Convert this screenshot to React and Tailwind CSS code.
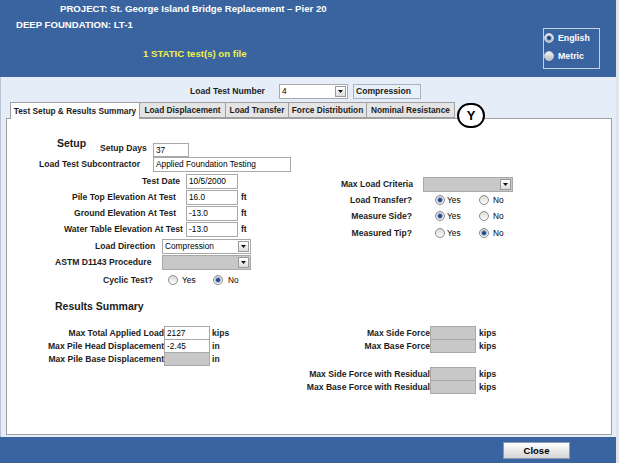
const LBL = 'text-[8.6px] font-bold text-[#1c1c1c] whitespace-nowrap leading-none';
const TXT = 'text-[8.3px] text-black whitespace-nowrap leading-none';

function Radio({ on, light }) {
  return (
    <span
      className={
        'flex h-[10px] w-[10px] shrink-0 items-center justify-center rounded-full border ' +
        (light
          ? 'border-[#c9d3e0] bg-gradient-to-b from-[#f4f4f4] to-[#bdbdbd]'
          : 'border-[#8c8c8c] bg-gradient-to-b from-[#d8d8d8] to-white')
      }
    >
      {on && <span className="h-[6px] w-[6px] rounded-full border border-[#9fb6d6] bg-[#1f467f]" />}
    </span>
  );
}

function Field({ className, value, gray }) {
  return (
    <div
      className={
        'flex shrink-0 items-center overflow-hidden border border-[#a8a8a8] pl-[2px] ' +
        (gray ? 'bg-[#c8c8c8] ' : 'bg-white ') +
        className
      }
    >
      <span className={TXT}>{value}</span>
    </div>
  );
}

function Dropdown({ className, value, gray }) {
  return (
    <div
      className={
        'flex h-[15px] shrink-0 items-center border border-[#a8a8a8] ' +
        (gray ? 'bg-[#c8c8c8] ' : 'bg-white ') +
        className
      }
    >
      <span className={TXT + ' flex-1 pl-[2px]'}>{value}</span>
      <span className="mr-[1px] flex h-[11px] w-[11px] items-center justify-center border border-[#9a9a9a] bg-gradient-to-b from-white to-[#dcdcdc]">
        <svg width="5" height="3" viewBox="0 0 5 3">
          <path d="M0 0h5L2.5 3z" fill="#111" />
        </svg>
      </span>
    </div>
  );
}

function YesNo({ yes, first, gapA, wYes, gapB }) {
  return (
    <>
      <span className={first}>
        <Radio on={yes} />
      </span>
      <span className={TXT + ' text-[#222] ' + gapA + ' ' + wYes}>Yes</span>
      <Radio on={!yes} />
      <span className={TXT + ' text-[#222] ' + gapB}>No</span>
    </>
  );
}

const TABS = [
  ['Load Displacement', 'w-[86px]'],
  ['Load Transfer', 'w-[63px]'],
  ['Force Distribution', 'w-[78px]'],
  ['Nominal Resistance', 'w-[88px]'],
];

export default function App() {
  return (
    <div className="h-[463px] w-full bg-[#dfe4ea] font-['Liberation_Sans',Arial,sans-serif]">
      <div className="flex h-[463px] w-[616px] flex-col">
        {/* header */}
        <div className="flex h-[77px] bg-[#3a64a0]">
          <div className="flex-1">
            <div className="pl-[60px] pt-[3px] text-[9.6px] font-bold leading-[11px] text-white">
              PROJECT: St. George Island Bridge Replacement – Pier 20
            </div>
            <div className="mt-[5px] pl-[16px] text-[9.6px] font-bold leading-[11px] text-white">
              DEEP FOUNDATION: LT-1
            </div>
            <div className="mt-[18px] pl-[143px] text-[9.6px] font-bold leading-[11px] text-[#eef04a]">
              1 STATIC test(s) on file
            </div>
          </div>
          <div className="mr-[16px] mt-[28px] flex h-[41px] w-[57px] flex-col gap-[8px] border border-[#c4d0e2] pt-[4px]">
            <div className="flex h-[10px] items-center gap-[4px]">
              <Radio on light />
              <span className="text-[8.8px] font-bold leading-none text-white">English</span>
            </div>
            <div className="flex h-[10px] items-center gap-[4px]">
              <Radio light />
              <span className="text-[8.8px] font-bold leading-none text-white">Metric</span>
            </div>
          </div>
        </div>

        {/* body */}
        <div className="relative flex-1 border-l border-[#b8c4d4] bg-[#e4edf8]">
          <div className="mt-[7px] flex h-[15px] items-center pl-[189px]">
            <span className={LBL + ' w-[89px]'}>Load Test Number</span>
            <Dropdown className="w-[69px]" value="4" />
            <div className="ml-[5px] flex h-[15px] w-[68px] items-center border border-[#a8b4c2] bg-[#e8f0f8] pl-[2px]">
              <span className={LBL}>Compression</span>
            </div>
          </div>

          <div className="mt-[3px] flex h-[16px] items-end pl-[9px]">
            <div className="relative z-10 -mb-px flex h-[17px] w-[130px] items-center justify-center border border-b-0 border-[#a0a0a0] bg-white">
              <span className="text-[8.3px] font-bold leading-none text-[#1c1c1c]">Test Setup &amp; Results Summary</span>
            </div>
            {TABS.map(([t, w]) => (
              <div
                key={t}
                className={'flex h-[16px] items-center justify-center border border-l-0 border-[#a0a0a0] bg-[#e4e4e4] ' + w}
              >
                <span className="text-[8.3px] font-bold leading-none text-[#1c1c1c]">{t}</span>
              </div>
            ))}
          </div>

          <div className="ml-[5px] h-[317px] w-[606px] border border-[#a0a0a0] bg-white">
            {/* setup */}
            <div className="mt-[18px] flex">
              <div className="w-[293px]">
                <div className="flex h-[20px] items-end pl-[50px]">
                  <span className="w-[43px] self-start text-[10.5px] font-bold leading-[13px] text-[#1c1c1c]">Setup</span>
                  <span className={LBL + ' mb-[4px] w-[53px]'}>Setup Days</span>
                  <Field className="h-[14px] w-[36px]" value="37" />
                </div>
                <div className="flex h-[15px] items-center pl-[32px]">
                  <span className={LBL + ' w-[114px]'}>Load Test Subcontractor</span>
                  <Field className="h-[15px] w-[138px]" value="Applied Foundation Testing" />
                </div>
                <div className="mt-[2px] flex h-[15px] items-center pl-[135px]">
                  <span className={LBL + ' w-[44px]'}>Test Date</span>
                  <Field className="h-[15px] w-[52px]" value="10/5/2000" />
                </div>
                <div className="mt-[1px] flex h-[15px] items-center pl-[65px]">
                  <span className={LBL + ' w-[114px]'}>Pile Top Elevation At Test</span>
                  <Field className="h-[15px] w-[52px]" value="16.0" />
                  <span className={LBL + ' ml-[3px]'}>ft</span>
                </div>
                <div className="mt-[1px] flex h-[15px] items-center pl-[67px]">
                  <span className={LBL + ' w-[112px]'}>Ground Elevation At Test</span>
                  <Field className="h-[15px] w-[52px]" value="-13.0" />
                  <span className={LBL + ' ml-[3px]'}>ft</span>
                </div>
                <div className="mt-[1px] flex h-[15px] items-center pl-[57px]">
                  <span className={LBL + ' w-[122px]'}>Water Table Elevation At Test</span>
                  <Field className="h-[15px] w-[52px]" value="-13.0" />
                  <span className={LBL + ' ml-[3px]'}>ft</span>
                </div>
                <div className="mt-[2px] flex h-[15px] items-center pl-[88px]">
                  <span className={LBL + ' w-[67px]'}>Load Direction</span>
                  <Dropdown className="w-[89px]" value="Compression" />
                </div>
                <div className="mt-[1px] flex h-[15px] items-center pl-[48px]">
                  <span className={LBL + ' w-[107px]'}>ASTM D1143 Procedure</span>
                  <Dropdown className="w-[89px]" value="" gray />
                </div>
                <div className="mt-[4px] flex h-[12px] items-center pl-[96px]">
                  <span className={LBL + ' w-[65px]'}>Cyclic Test?</span>
                  <YesNo yes={false} first="" gapA="ml-[4px]" wYes="w-[31px]" gapB="ml-[5px]" />
                </div>
              </div>

              <div className="mt-[40px]">
                <div className="flex h-[15px] items-center">
                  <span className={LBL + ' w-[113px] text-right'}>Max Load Criteria</span>
                  <Dropdown className="ml-[10px] w-[90px]" value="" gray />
                </div>
                {[
                  ['Load Transfer?', true, 'mt-[2px]'],
                  ['Measure Side?', true, 'mt-[4px]'],
                  ['Measured Tip?', false, 'mt-[5px]'],
                ].map(([l, y, m]) => (
                  <div key={l} className={'flex h-[12px] items-center ' + m}>
                    <span className={LBL + ' w-[112px] text-right'}>{l}</span>
                    <YesNo yes={y} first="ml-[23px]" gapA="ml-[2px]" wYes="w-[32px]" gapB="ml-[4px]" />
                  </div>
                ))}
              </div>
            </div>

            {/* results */}
            <div className="mt-[14px] pl-[48px] text-[10.5px] font-bold leading-[13px] text-[#1c1c1c]">
              Results Summary
            </div>
            <div className="mt-[13px] flex">
              <div className="w-[293px]">
                {[
                  ['Max Total Applied Load', '2127', false, 'kips', ''],
                  ['Max Pile Head Displacement', '-2.45', false, 'in', '-mt-px'],
                  ['Max Pile Base Displacement', '', true, 'in', '-mt-px'],
                ].map(([l, v, g, u, m]) => (
                  <div key={l} className={'flex h-[14px] items-center ' + m}>
                    <span className={LBL + ' w-[157px] text-right'}>{l}</span>
                    <Field className="h-[14px] w-[46px]" value={v} gray={g} />
                    <span className={LBL + ' ml-[2px]'}>{u}</span>
                  </div>
                ))}
              </div>
              <div>
                {[
                  ['Max Side Force', ''],
                  ['Max Base Force', '-mt-px'],
                  ['Max Side Force with Residual', 'mt-[14px]'],
                  ['Max Base Force with Residual', '-mt-px'],
                ].map(([l, m]) => (
                  <div key={l} className={'flex h-[14px] items-center ' + m}>
                    <span className={LBL + ' w-[130px] text-right'}>{l}</span>
                    <Field className="h-[14px] w-[46px]" value="" gray />
                    <span className={LBL + ' ml-[3px]'}>kips</span>
                  </div>
                ))}
              </div>
            </div>
          </div>

          {/* annotation marker */}
          <div className="absolute left-[456px] top-[26px] z-20 flex h-[25px] w-[28px] items-center justify-center rounded-full border-2 border-black bg-white">
            <span className="text-[13px] font-bold leading-none text-black">Y</span>
          </div>
        </div>

        {/* footer */}
        <div className="flex h-[26px] items-start justify-end bg-[#3a64a0] pr-[46px] pt-[5px]">
          <div className="flex h-[17px] w-[67px] items-center justify-center border border-[#8a9ab0] bg-gradient-to-b from-white to-[#d4d4d4]">
            <span className="text-[9.5px] font-bold leading-none text-black">Close</span>
          </div>
        </div>
      </div>
    </div>
  );
}
